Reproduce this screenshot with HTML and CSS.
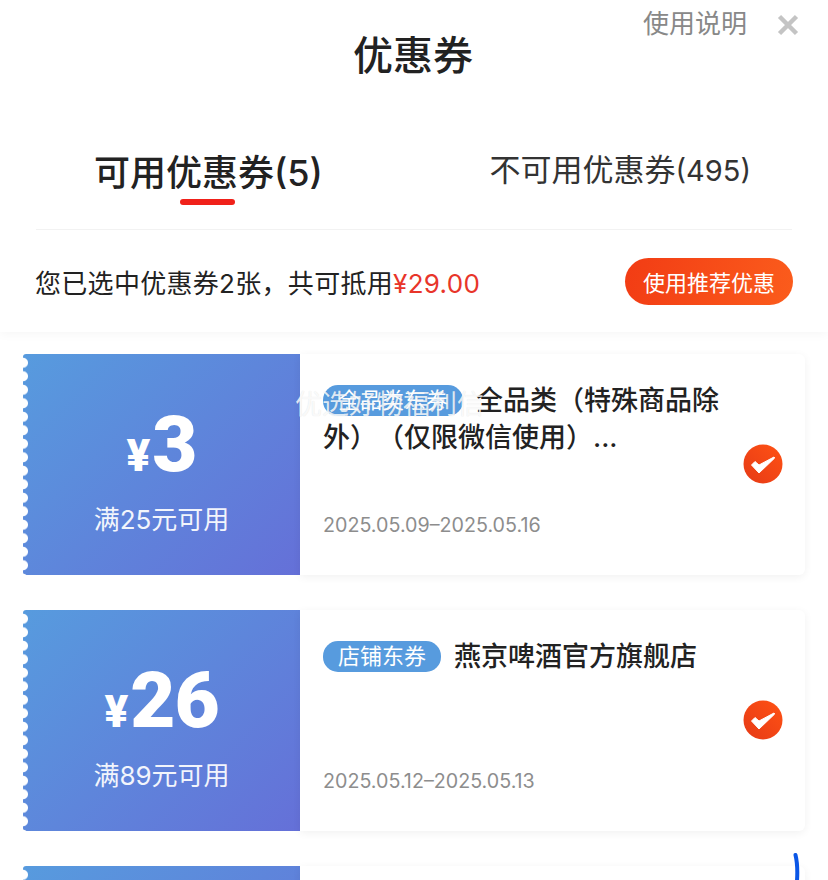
FILE: index.html
```html
<!DOCTYPE html>
<html lang="zh-CN">

<head>
    <meta charset="utf-8">
    <meta name="viewport" content="width=device-width, initial-scale=1">
    <title>优惠券</title>
    <link rel="stylesheet" href="styles.css">
</head>

<body>
    <header class="sheet-head">
        <div class="title-bar">
            <h1 class="title">优惠券</h1>
            <span class="help">使用说明</span>
            <svg class="close" width="22" height="22" viewBox="0 0 22 22"><path d="M2.5 2.5l17 17M19.500 2.500l-17 17" stroke="#c4c4c4" stroke-width="4.500" fill="none"/></svg>
        </div>
        <nav class="tabs">
            <div class="tab tab--active">可用优惠券(5)</div>
            <div class="tab">不可用优惠券<span class="tab-count">(495)</span></div>
        </nav>
        <div class="summary">
            <p class="summary-text">您已选中优惠券2张，共可抵用<em>¥29.00</em></p>
            <button class="recommend">使用推荐优惠</button>
        </div>
    </header>

    <main class="coupons">
        <article class="coupon">
            <div class="ticket">
                <div class="amount"><span class="yen">¥</span>3</div>
                <div class="rule">满25元可用</div>
            </div>
            <div class="detail">
                <h2 class="name"><span class="tag">全品类东券</span>全品类（特殊商品除外）（仅限微信使用）...</h2>
                <div class="dates">2025.05.09–2025.05.16</div>
                <svg class="check" width="40" height="40" viewBox="0 0 40 40"><use href="#check"/></svg>
            </div>
        </article>

        <article class="coupon">
            <div class="ticket">
                <div class="amount"><span class="yen">¥</span>26</div>
                <div class="rule">满89元可用</div>
            </div>
            <div class="detail">
                <h2 class="name"><span class="tag">店铺东券</span>燕京啤酒官方旗舰店</h2>
                <div class="dates">2025.05.12–2025.05.13</div>
                <svg class="check" width="40" height="40" viewBox="0 0 40 40"><use href="#check"/></svg>
            </div>
        </article>

        <article class="coupon">
            <div class="ticket"></div>
            <div class="detail"></div>
        </article>
    </main>

    <div class="watermark">优选好物福利信</div>
    <svg class="blue-mark" width="10" height="28" viewBox="0 0 10 28"><path d="M3.500 2Q6 12 5 28" stroke="#0a56e6" stroke-width="4" stroke-linecap="round" fill="none"/></svg>

    <svg width="0" height="0" class="defs">
        <defs>
            <linearGradient id="checkFill" x1="0" y1="1" x2="1" y2="0">
                <stop offset="0" stop-color="#e63a16"/>
                <stop offset="1" stop-color="#ff5214"/>
            </linearGradient>
            <g id="check">
                <circle cx="20" cy="20" r="19.500" fill="url(#checkFill)"/>
                <path d="M8.500 21l3.500-3.500 4 3.500L31 13l.7 1L16 29z" fill="#fff" stroke="#fff" stroke-width="1" stroke-linejoin="round"/>
            </g>
        </defs>
    </svg>
</body>

</html>
```

FILE: styles.css
```css
html {
    box-sizing: border-box;
}

*,
*:before,
*:after {
    box-sizing: inherit;
}

body {
    background: #fff;
    color: #222;
    font-family: "Inter", "Noto Sans CJK SC", sans-serif;
    height: 880px;
    margin: 0;
    overflow: hidden;
    position: relative;
    text-spacing-trim: space-all;
}

.defs {
    position: absolute;
}

.sheet-head {
    box-shadow: 0 2px 10px rgba(0, 0, 0, .04);
    height: 332px;
    padding: 0 36px;
}

.title-bar {
    height: 110px;
    position: relative;
}

.title {
    font-size: 40px;
    font-weight: 500;
    left: -2px;
    line-height: 58px;
    margin: 0;
    position: absolute;
    right: 0;
    text-align: center;
    top: 27px;
}

.help {
    color: #888;
    font-size: 26px;
    line-height: 38px;
    position: absolute;
    right: 45px;
    top: 5px;
}

.close {
    position: absolute;
    right: -7px;
    top: 14px;
}

.tabs {
    border-bottom: 1px solid #f2f2f2;
    display: flex;
    height: 120px;
    justify-content: space-between;
    padding: 0 41px 0 58px;
}

.tab {
    color: #333;
    font-size: 31px;
    line-height: 44px;
    padding-top: 38px;
}

.tab-count {
    font-size: 29px;
}

.tab--active {
    color: #222;
    font-size: 36px;
    font-weight: 500;
    line-height: 50px;
    padding-top: 38px;
    position: relative;
}

.tab--active:after {
    background: #f0211a;
    border-radius: 3px;
    bottom: 24px;
    content: "";
    height: 6px;
    left: 86px;
    position: absolute;
    width: 55px;
}

.summary {
    align-items: center;
    display: flex;
    height: 102px;
    justify-content: space-between;
    margin-right: -1px;
}

.summary-text {
    font-size: 26px;
    letter-spacing: .3px;
    margin: 0 0 0 -1px;
}

.summary-text em {
    color: #e8352a;
    font-style: normal;
}

.recommend {
    background: linear-gradient(100deg, #f23c14, #fb5c1c);
    border: 0;
    border-radius: 24px;
    color: #fff;
    font-family: inherit;
    font-size: 22px;
    height: 47px;
    padding: 0;
    width: 168px;
}

.coupons {
    display: flex;
    flex-direction: column;
    gap: 35px;
    padding: 22px 23px 0;
}

.coupon {
    display: flex;
    flex-shrink: 0;
    height: 221px;
    width: 782px;
}

.ticket {
    align-items: center;
    background: linear-gradient(135deg, #579bde, #6570d8);
    border-radius: 3px 0 0 3px;
    color: #fff;
    display: flex;
    flex-direction: column;
    padding-top: 47px;
    position: relative;
    width: 277px;
}

/* scalloped left edge */
.ticket:before {
    background: radial-gradient(circle at 0 50%, #fff 4.500px, transparent 5.500px) 0 2px / 6px 13.500px repeat-y;
    bottom: 0;
    content: "";
    left: 0;
    position: absolute;
    top: 0;
    width: 6px;
}

.amount {
    font-family: "Roboto", sans-serif;
    font-size: 78px;
    font-weight: 900;
    letter-spacing: -1px;
    line-height: 88px;
}

.yen {
    font-size: 44px;
    margin-right: 3px;
}

.rule {
    font-size: 26px;
    line-height: 36px;
    margin-top: 2px;
    opacity: .92;
}

.detail {
    border-radius: 0 6px 6px 0;
    box-shadow: 0 2px 8px rgba(0, 0, 0, .06);
    flex: 1;
    padding: 28px 72px 0 23px;
    position: relative;
}

.name {
    font-size: 27px;
    font-weight: 500;
    line-height: 37px;
    margin: 0;
}

.tag {
    background: #579bde;
    border-radius: 15px;
    color: #fff;
    display: inline-block;
    font-size: 22px;
    font-weight: 400;
    line-height: 31px;
    margin-right: 13px;
    padding: 0 15px;
    vertical-align: 2px;
}

.dates {
    bottom: 36px;
    color: #8d8d8d;
    font-size: 19.700px;
    left: 23px;
    line-height: 28px;
    position: absolute;
}

.check {
    position: absolute;
    right: 22px;
    top: 90px;
}

/* floating text that lies over the first coupon */
.watermark {
    color: rgba(255, 255, 255, .82);
    font-size: 27px;
    left: 295px;
    line-height: 38px;
    position: absolute;
    text-shadow: 0 0 1px rgba(0, 0, 0, .12);
    top: 386px;
}

.blue-mark {
    position: absolute;
    right: 26px;
    top: 853px;
}
```
